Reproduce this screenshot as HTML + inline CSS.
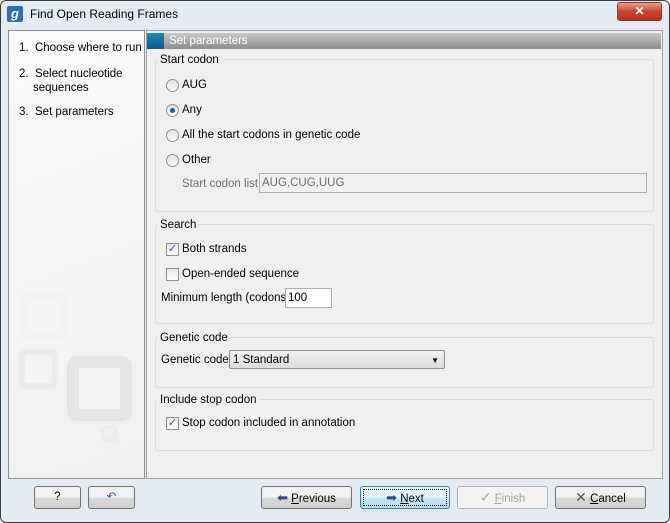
<!DOCTYPE html><html><head><style>
body{margin:0;width:670px;height:523px;background:#fff;font-family:"Liberation Sans",sans-serif;font-size:11.5px;color:#000;overflow:hidden;position:relative}
.a{position:absolute}
.t{position:absolute;margin-top:1px}
.win{left:0;top:0;width:668px;height:521px;border:1px solid #3a3a3a;border-radius:6px;background:#e4ebf2}
.grp{position:absolute;border:1px solid #d5dfe5;border-radius:3px;background:#f0f0f0}
.lbl{position:absolute;background:#f0f0f0;padding:0 2px;margin-top:1px}
.rad{position:absolute;width:11px;height:11px;border:1px solid #8f8f8f;border-radius:50%;background:linear-gradient(#e4e4e4,#fafafa)}
.chk{position:absolute;width:11px;height:11px;border:1px solid #8f8f8f;background:linear-gradient(#e8e8e8,#fff)}
.btn{position:absolute;top:486px;height:21px;border:1px solid #707070;border-radius:3px;background:linear-gradient(#f2f2f2 45%,#d8d8d8 55%,#d0d0d0);text-align:center;line-height:21px;font-size:11.5px}
.sq{position:absolute;border-style:solid;border-color:#ececec;box-sizing:border-box}
</style></head><body>
<div class="a win"></div>
<div class="a" style="left:7px;top:6px;width:16px;height:16px;background:#2a6fb5;border-radius:2px;color:#fff;font-weight:bold;font-style:italic;font-size:13px;line-height:15px;text-align:center">g</div>
<div class="a" style="left:30px;top:7px;font-size:12px">Find Open Reading Frames</div>
<div class="a" style="left:617px;top:2px;width:43px;height:17px;border:1px solid #8a3a2a;border-radius:3px;background:linear-gradient(#e8a08c,#c8442c 50%,#b8341c);color:#fff;font-weight:bold;text-align:center;line-height:16px;font-size:12px">✕</div>
<div class="a" style="left:8px;top:30px;width:135px;height:447px;border:1px solid #8f8f8f;background:linear-gradient(160deg,#fafafa,#f0f0f0)"></div>
<div class="sq" style="left:20px;top:292px;width:48px;height:48px;border-width:8px;border-radius:8px;border-color:#f1f1f1"></div>
<div class="sq" style="left:19px;top:349px;width:39px;height:40px;border-width:6px;border-radius:6px"></div>
<div class="sq" style="left:67px;top:356px;width:65px;height:65px;border-width:12px;border-radius:10px;border-color:#e6e6e6"></div>
<div class="sq" style="left:101px;top:426px;width:16px;height:16px;border-width:3px;border-radius:3px"></div>
<div class="sq" style="left:59px;top:431px;width:37px;height:37px;border-width:6px;border-radius:6px;border-color:#f1f1f1"></div>
<div class="sq" style="left:108px;top:447px;width:23px;height:22px;border-width:4px;border-radius:4px;border-color:#f1f1f1"></div>
<div class="t" style="left:19px;top:41px">1.&nbsp; Choose where to run</div>
<div class="t" style="left:19px;top:66px;line-height:14px">2.&nbsp; Select nucleotide<br><span style="padding-left:14px">sequences</span></div>
<div class="t" style="left:19px;top:105px">3.&nbsp; Set parameters</div>
<div class="a" style="left:146px;top:30px;width:515px;height:447px;border:1px solid #a0a0a0;background:#f0f0f0"></div>
<div class="a" style="left:147px;top:33px;width:514px;height:16px;background:linear-gradient(#c8c8c8,#8c8c8c)"></div>
<div class="a" style="left:147px;top:33px;width:17px;height:16px;background:linear-gradient(#1a8ab8,#0a5a90)"></div>
<div class="a" style="left:169px;top:35px;color:#fff">Set parameters</div>

<div class="grp" style="left:155px;top:59px;width:497px;height:151px"></div>
<div class="lbl" style="left:158px;top:53px">Start codon</div>
<div class="rad" style="left:166px;top:79px"></div><div class="t" style="left:182px;top:78px">AUG</div>
<div class="rad" style="left:166px;top:104px"><div style="margin:3px;width:5px;height:5px;border-radius:50%;background:#1a5f9a"></div></div><div class="t" style="left:182px;top:103px">Any</div>
<div class="rad" style="left:166px;top:129px"></div><div class="t" style="left:182px;top:128px">All the start codons in genetic code</div>
<div class="rad" style="left:166px;top:154px"></div><div class="t" style="left:182px;top:153px">Other</div>
<div class="t" style="left:182px;top:177px;color:#6d6d6d">Start codon list</div>
<div class="a" style="left:259px;top:173px;width:384px;height:18px;border:1px solid #adadad;background:#f0f0f0;color:#6d6d6d;line-height:19px;padding-left:2px">AUG,CUG,UUG</div>

<div class="grp" style="left:155px;top:224px;width:497px;height:98px"></div>
<div class="lbl" style="left:158px;top:218px">Search</div>
<div class="chk" style="left:166px;top:243px;color:#2a5a9a;font-size:11px;line-height:11px;text-align:center">✓</div><div class="t" style="left:182px;top:242px">Both strands</div>
<div class="chk" style="left:166px;top:268px"></div><div class="t" style="left:182px;top:267px">Open-ended sequence</div>
<div class="t" style="left:161px;top:291px">Minimum length (codons)</div>
<div class="a" style="left:285px;top:288px;width:43px;height:18px;border:1px solid #adadad;background:#fff;line-height:19px;padding-left:2px">100</div>

<div class="grp" style="left:155px;top:337px;width:497px;height:49px"></div>
<div class="lbl" style="left:158px;top:331px">Genetic code</div>
<div class="t" style="left:161px;top:353px">Genetic code</div>
<div class="a" style="left:229px;top:350px;height:19px;border:1px solid #8f8f8f;border-radius:2px;background:linear-gradient(#f2f2f2,#dcdcdc);line-height:19px;padding-left:3px;box-sizing:border-box;width:216px">1 Standard<span style="position:absolute;right:5px;top:0;font-size:8px">▼</span></div>

<div class="grp" style="left:155px;top:399px;width:497px;height:50px"></div>
<div class="lbl" style="left:158px;top:393px">Include stop codon</div>
<div class="chk" style="left:166px;top:417px;color:#2a5a9a;font-size:11px;line-height:11px;text-align:center">✓</div><div class="t" style="left:182px;top:416px">Stop codon included in annotation</div>

<div class="btn" style="left:34px;width:45px">?</div>
<div class="btn" style="left:88px;width:45px;color:#2a5a9a">↶</div>
<div class="btn" style="left:261px;width:89px"><span style="color:#2a4a7a;font-size:13px">⬅</span> <u>P</u>revious</div>
<div class="btn" style="left:360px;width:88px;border-color:#3c7fb1;background:linear-gradient(#eaf6fd 45%,#c4e5f6 55%,#b8ddf4)"><div style="position:absolute;left:2px;top:2px;right:2px;bottom:2px;border:1px dotted #000"></div><span style="color:#2a4a7a;font-size:13px">➡</span> <u>N</u>ext</div>
<div class="btn" style="left:457px;width:89px;border-color:#b5b5b5;background:#f4f4f4;color:#a0a0a0"><span style="font-size:14px">✓</span> <u>F</u>inish</div>
<div class="btn" style="left:555px;width:89px"><span style="color:#555;font-size:14px">✕</span> <u>C</u>ancel</div>
</body></html>
